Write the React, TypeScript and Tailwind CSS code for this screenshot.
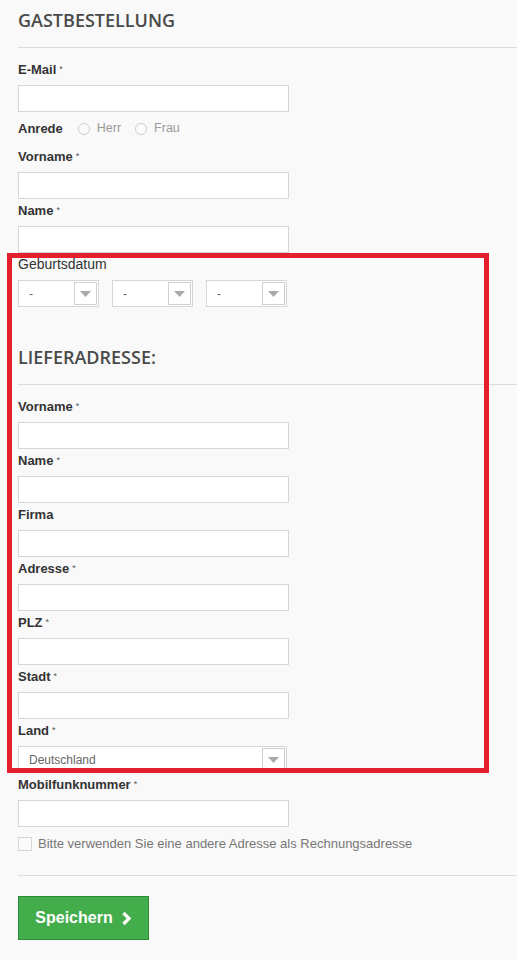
import type { ReactNode } from 'react';

const sans = 'font-["Liberation_Sans",Arial,sans-serif]';

function Star() {
  return <sup className="relative -top-[2px] ml-[3px] text-[9px] font-normal text-[#555]">*</sup>;
}

function Label({ children, required, className = '' }: { children: ReactNode; required?: boolean; className?: string }) {
  return (
    <label className={`block pt-[3px] pb-[7px] text-[13px] font-bold leading-[17px] text-[#333] ${className}`}>
      {children}
      {required && <Star />}
    </label>
  );
}

function TextInput() {
  return <input type="text" className="block h-[27px] w-[271px] border border-[#d6d6d6] bg-white outline-none" />;
}

function Arrow() {
  return (
    <span className="m-[1px] flex w-[23px] items-center justify-center border border-[#d0d0d0] bg-white">
      <svg width="11" height="6" viewBox="0 0 11 6">
        <path d="M0 0h11L5.5 6z" fill="#aaa" />
      </svg>
    </span>
  );
}

function Select({ value, width }: { value: string; width: string }) {
  return (
    <div className={`flex h-[27px] ${width} border border-[#d6d6d6] bg-white`}>
      <span className="flex flex-1 items-center pl-[10px] text-[12px] text-[#666]">{value}</span>
      <Arrow />
    </div>
  );
}

function Field({ label, required }: { label: string; required?: boolean }) {
  return (
    <div>
      <Label required={required}>{label}</Label>
      <TextInput />
    </div>
  );
}

function Heading({ children, className = '' }: { children: ReactNode; className?: string }) {
  return (
    <h2
      className={`border-b border-[#dcdcdc] pb-[15px] font-["Open_Sans",sans-serif] text-[18px] font-semibold leading-[24px] text-[#4a4a4a] ${className}`}
    >
      {children}
    </h2>
  );
}

function Radio({ label }: { label: string }) {
  return (
    <span className="flex items-center gap-[7px]">
      <span className="h-[12px] w-[12px] rounded-full border border-[#cfcfcf] bg-[#fbfbfb]" />
      <span className="text-[12.5px] text-[#999]">{label}</span>
    </span>
  );
}

export default function App() {
  return (
    <main className={`relative min-h-[960px] w-full bg-[#f9f9f9] pl-[18px] ${sans}`}>
      <Heading className="pt-[8px]">GASTBESTELLUNG</Heading>

      <div className="mt-[10px]">
        <Field label="E-Mail" required />
      </div>

      <div className="flex h-[33px] items-center gap-[15px]">
        <span className="text-[13px] font-bold text-[#333]">Anrede</span>
        <div className="flex items-center gap-[14px]">
          <Radio label="Herr" />
          <Radio label="Frau" />
        </div>
      </div>

      <Field label="Vorname" required />
      <Field label="Name" required />

      <div>
        <label className="block pt-[3px] pb-[7px] text-[14px] leading-[17px] text-[#333]">Geburtsdatum</label>
        <div className="flex gap-[13px]">
          <Select value="-" width="w-[81px]" />
          <Select value="-" width="w-[81px]" />
          <Select value="-" width="w-[81px]" />
        </div>
      </div>

      <Heading className="mt-[38px]">LIEFERADRESSE:</Heading>

      <div className="mt-[10px]">
        <Field label="Vorname" required />
        <Field label="Name" required />
        <Field label="Firma" />
        <Field label="Adresse" required />
        <Field label="PLZ" required />
        <Field label="Stadt" required />
        <div>
          <Label required>Land</Label>
          <Select value="Deutschland" width="w-[269px]" />
        </div>
        <Field label="Mobilfunknummer" required />
      </div>

      <label className="mt-[7px] flex h-[20px] items-center gap-[6px]">
        <span className="h-[14px] w-[14px] border border-[#d6d6d6] bg-[#fbfbfb]" />
        <span className="text-[13px] text-[#777]">Bitte verwenden Sie eine andere Adresse als Rechnungsadresse</span>
      </label>

      <hr className="mt-[21px] border-[#dcdcdc]" />

      <button className="mt-[20px] flex h-[44px] w-[131px] items-center justify-center gap-[8px] border border-[#2f8a37] bg-[#43ad4c] text-[16px] font-bold text-white">
        Speichern
        <svg width="11" height="15" viewBox="0 0 11 15">
          <path d="M2.5 2l5.5 5.5-5.5 5.5" fill="none" stroke="#fff" strokeWidth="3.2" />
        </svg>
      </button>

      {/* annotation frame drawn over the form */}
      <div className="pointer-events-none absolute left-[7px] top-[253px] h-[520px] w-[482px] border-[5px] border-[#e3202b]" />
    </main>
  );
}
